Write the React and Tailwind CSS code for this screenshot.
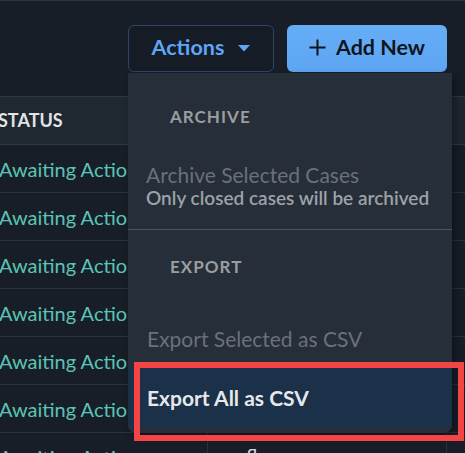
const rows = [1, 2, 3, 4, 5, 6, 7];

function Caret() {
  return (
    <svg width="12" height="7" viewBox="0 0 12 7" className="mt-[2px]">
      <path d="M0 0 L12 0 L6 6.5 Z" fill="#5ea6f6" />
    </svg>
  );
}

function Plus() {
  return (
    <svg width="17" height="17" viewBox="0 0 17 17">
      <path d="M8.5 0.5 V16.5 M0.5 8.5 H16.5" stroke="#10151c" strokeWidth="2" />
    </svg>
  );
}

export default function App() {
  return (
    <div className="relative h-[453px] w-[465px] overflow-hidden bg-[#171e28] font-['Lato',sans-serif]">
      <div className="border-t border-[#2c3540] pt-[24px]">
        <div className="flex justify-end gap-[13px] pr-[18px]">
          <button className="flex h-[47px] w-[146px] items-center justify-center gap-[14px] rounded-md border border-[#2b4668] bg-[#151c26] pb-[3px] text-[21.5px] font-bold text-[#5ea6f6]">
            Actions
            <Caret />
          </button>
          <button className="flex h-[47px] w-[160px] items-center justify-center gap-[10px] rounded-md bg-gradient-to-b from-[#65adf7] to-[#5ea6f2] pb-[2px] text-[21.5px] font-bold text-[#10151c]">
            <Plus />
            Add New
          </button>
        </div>

        <div className="mt-[24px]">
          <div className="grid h-[49px] grid-cols-[207px_239px_1fr] border-y border-[#2f3944] bg-[#1f2731]">
            <div className="-ml-[2px] flex items-center text-[18px] font-bold text-[#e1e4e7]">
              STATUS
            </div>
            <div className="border-l border-[#2a323c]" />
            <div className="border-l border-[#2a323c]" />
          </div>
          {rows.map((r) => (
            <div
              key={r}
              className="grid h-[48px] grid-cols-[207px_239px_1fr] border-b border-[#2a323c]"
            >
              <div className="-ml-[1px] flex items-center whitespace-nowrap text-[20px] text-[#5cc3b6]">
                Awaiting Action
              </div>
              <div className="flex items-center border-l border-[#2a323c] pl-[38px] text-[19px] text-[#d8dce0]">
                {r === 7 ? "fl" : ""}
              </div>
              <div className="border-l border-[#2a323c]" />
            </div>
          ))}
        </div>
      </div>

      <div className="absolute left-[128px] top-[73px] w-[324px] rounded-b-lg bg-[#252e39] pb-[6px] shadow-[4px_4px_8px_rgba(0,0,0,0.35)]">
        <div className="pl-[42px] pt-[32px] text-[17px] font-bold leading-6 tracking-[0.06em] text-[#9b9d9f]">
          ARCHIVE
        </div>
        <div className="px-[18px] pb-[20px] pt-[35px]">
          <div className="text-[21px] leading-[22px] text-[#6b7179]">Archive Selected Cases</div>
          <div className="text-[19px] font-semibold leading-[23px] text-[#9ea2a7]">
            Only closed cases will be archived
          </div>
        </div>
        <div className="border-t border-[#4a525b]" />
        <div className="pl-[42px] pt-[25px] text-[17px] font-bold leading-6 tracking-[0.06em] text-[#9b9d9f]">
          EXPORT
        </div>
        <div className="mt-[30px] flex h-[59px] items-center px-[19px] text-[21px] text-[#6b7179]">
          Export Selected as CSV
        </div>
        <div className="flex h-[59px] items-center bg-[#1b3049] px-[19px] text-[21px] font-bold text-[#e6e8eb]">
          Export All as CSV
        </div>
      </div>

      <div className="pointer-events-none absolute left-[134px] top-[362px] h-[79px] w-[330px] border-[6px] border-[#f34545]" />
    </div>
  );
}
